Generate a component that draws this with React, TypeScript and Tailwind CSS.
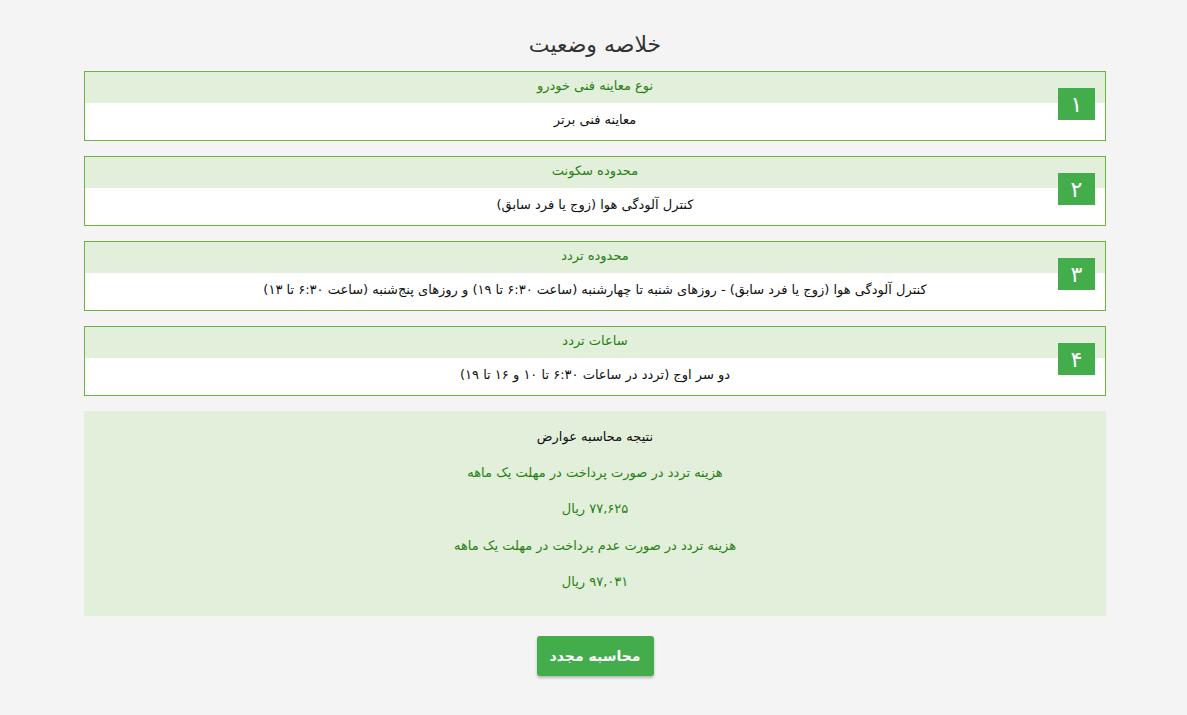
import React from 'react';

interface Row {
    num: string;
    title: string;
    value: string;
}

const rows: Row[] = [
    { num: '۱', title: 'نوع معاینه فنی خودرو', value: 'معاینه فنی برتر' },
    { num: '۲', title: 'محدوده سکونت', value: 'کنترل آلودگی هوا (زوج یا فرد سابق)' },
    {
        num: '۳',
        title: 'محدوده تردد',
        value: 'کنترل آلودگی هوا (زوج یا فرد سابق) - روزهای شنبه تا چهارشنبه (ساعت ۶:۳۰ تا ۱۹) و روزهای پنج‌شنبه (ساعت ۶:۳۰ تا ۱۳)',
    },
    { num: '۴', title: 'ساعات تردد', value: 'دو سر اوج (تردد در ساعات ۶:۳۰ تا ۱۰ و ۱۶ تا ۱۹)' },
];

export default function App() {
    return (
        <div
            className="min-h-screen bg-[#f4f4f4] text-[13px]"
            style={{ fontFamily: '"DejaVu Sans", "Noto Sans", sans-serif' }}
        >
            <div dir="rtl" className="ml-[84px] w-[1022px] pt-[31px]">
                <h2 className="text-center text-[22px] leading-[28px] text-[#333]">خلاصه وضعیت</h2>

                <div className="mt-[12px] flex flex-col gap-[15px]">
                    {rows.map((r) => (
                        <div key={r.num} className="relative border border-[#6fb240] bg-white">
                            <div className="flex h-[31px] items-center justify-center bg-[#e2efda] pb-[3px] text-[#2a7f14]">
                                {r.title}
                            </div>
                            <div className="flex h-[37px] items-center justify-center pb-[4px] text-[#111]">
                                {r.value}
                            </div>
                            <div className="absolute right-[10px] top-[16px] flex h-[32px] w-[37px] items-center justify-center bg-[#42ad4a] text-[22px] text-white">
                                {r.num}
                            </div>
                        </div>
                    ))}
                </div>

                <div className="mt-[15px] flex h-[205px] flex-col items-center bg-[#e2efda] pt-[16px]">
                    <div className="leading-[20px] text-[#111]">نتیجه محاسبه عوارض</div>
                    <div className="mt-[16px] leading-[20px] text-[#2a7f14]">هزینه تردد در صورت پرداخت در مهلت یک ماهه</div>
                    <div className="mt-[16px] leading-[20px] text-[#2a7f14]">۷۷,۶۲۵ ریال</div>
                    <div className="mt-[17px] leading-[20px] text-[#2a7f14]">هزینه تردد در صورت عدم پرداخت در مهلت یک ماهه</div>
                    <div className="mt-[16px] leading-[20px] text-[#2a7f14]">۹۷,۰۳۱ ریال</div>
                </div>

                <div className="mt-[20px] flex justify-center">
                    <button className="h-[40px] w-[117px] rounded-[3px] bg-[#42ad4a] text-[14px] font-bold text-white shadow-[0_2px_3px_rgba(0,0,0,0.25)]">
                        محاسبه مجدد
                    </button>
                </div>
            </div>
        </div>
    );
}
